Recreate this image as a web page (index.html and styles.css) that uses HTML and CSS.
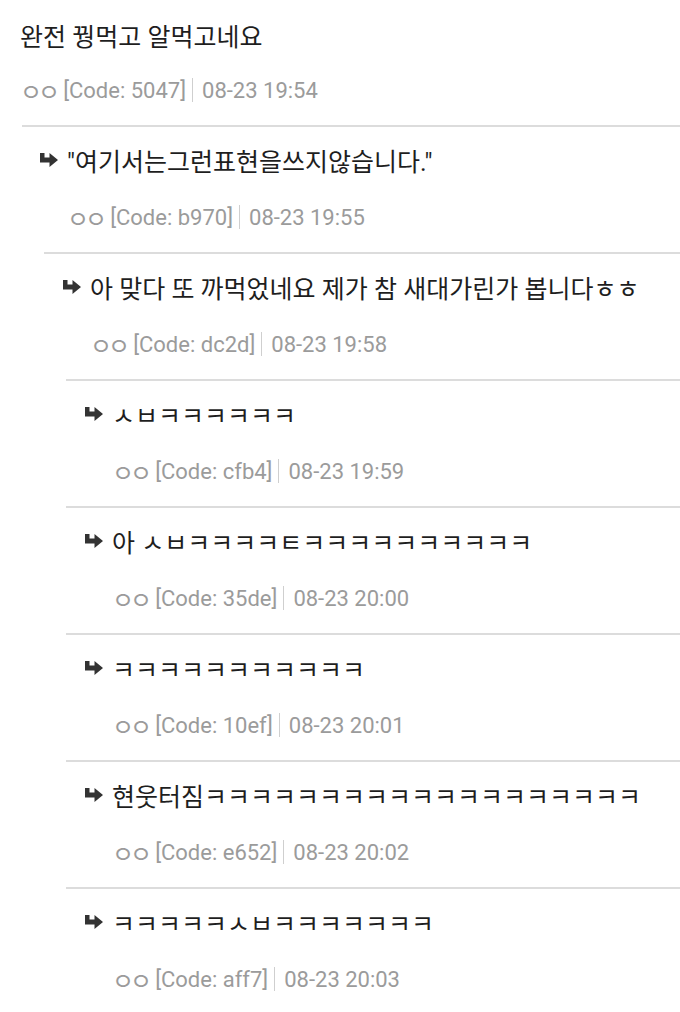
FILE: index.html
```html
<!DOCTYPE html>
<html lang="ko">
<head>
    <meta charset="UTF-8">
    <meta name="viewport" content="width=device-width, initial-scale=1.0">
    <title>댓글</title>
    <link rel="stylesheet" href="styles.css">
</head>
<body>
    <!-- 댓글 목록 -->
    <ul class="cmt-list">
        <li class="cmt d0">
            <div class="cmt-body">
                <p class="cmt-txt">완전 꿩먹고 알먹고네요</p>
                <div class="meta">
                    <span class="nick">ㅇㅇ</span><span class="code">[Code: 5047]</span><span class="sep"></span><span class="date">08-23 19:54</span>
                </div>
            </div>
        </li>
        <li class="cmt d1">
            <div class="cmt-body">
                <p class="cmt-txt"><svg class="re" viewBox="0 0 18 14"><path d="M0 0H4.5V4.5H9.5V0L18 7L9.5 14V9.5H0Z"/></svg>"여기서는그런표현을쓰지않습니다."</p>
                <div class="meta">
                    <span class="nick">ㅇㅇ</span><span class="code">[Code: b970]</span><span class="sep"></span><span class="date">08-23 19:55</span>
                </div>
            </div>
        </li>
        <li class="cmt d2">
            <div class="cmt-body">
                <p class="cmt-txt"><svg class="re" viewBox="0 0 18 14"><path d="M0 0H4.5V4.5H9.5V0L18 7L9.5 14V9.5H0Z"/></svg>아 맞다 또 까먹었네요 제가 참 새대가린가 봅니다ㅎㅎ</p>
                <div class="meta">
                    <span class="nick">ㅇㅇ</span><span class="code">[Code: dc2d]</span><span class="sep"></span><span class="date">08-23 19:58</span>
                </div>
            </div>
        </li>
        <li class="cmt d3">
            <div class="cmt-body">
                <p class="cmt-txt"><svg class="re" viewBox="0 0 18 14"><path d="M0 0H4.5V4.5H9.5V0L18 7L9.5 14V9.5H0Z"/></svg>ㅅㅂㅋㅋㅋㅋㅋㅋ</p>
                <div class="meta">
                    <span class="nick">ㅇㅇ</span><span class="code">[Code: cfb4]</span><span class="sep"></span><span class="date">08-23 19:59</span>
                </div>
            </div>
        </li>
        <li class="cmt d3">
            <div class="cmt-body">
                <p class="cmt-txt"><svg class="re" viewBox="0 0 18 14"><path d="M0 0H4.5V4.5H9.5V0L18 7L9.5 14V9.5H0Z"/></svg>아 ㅅㅂㅋㅋㅋㅋㅌㅋㅋㅋㅋㅋㅋㅋㅋㅋㅋ</p>
                <div class="meta">
                    <span class="nick">ㅇㅇ</span><span class="code">[Code: 35de]</span><span class="sep"></span><span class="date">08-23 20:00</span>
                </div>
            </div>
        </li>
        <li class="cmt d3">
            <div class="cmt-body">
                <p class="cmt-txt"><svg class="re" viewBox="0 0 18 14"><path d="M0 0H4.5V4.5H9.5V0L18 7L9.5 14V9.5H0Z"/></svg>ㅋㅋㅋㅋㅋㅋㅋㅋㅋㅋㅋ</p>
                <div class="meta">
                    <span class="nick">ㅇㅇ</span><span class="code">[Code: 10ef]</span><span class="sep"></span><span class="date">08-23 20:01</span>
                </div>
            </div>
        </li>
        <li class="cmt d3">
            <div class="cmt-body">
                <p class="cmt-txt"><svg class="re" viewBox="0 0 18 14"><path d="M0 0H4.5V4.5H9.5V0L18 7L9.5 14V9.5H0Z"/></svg>현웃터짐ㅋㅋㅋㅋㅋㅋㅋㅋㅋㅋㅋㅋㅋㅋㅋㅋㅋㅋㅋ</p>
                <div class="meta">
                    <span class="nick">ㅇㅇ</span><span class="code">[Code: e652]</span><span class="sep"></span><span class="date">08-23 20:02</span>
                </div>
            </div>
        </li>
        <li class="cmt d3">
            <div class="cmt-body">
                <p class="cmt-txt"><svg class="re" viewBox="0 0 18 14"><path d="M0 0H4.5V4.5H9.5V0L18 7L9.5 14V9.5H0Z"/></svg>ㅋㅋㅋㅋㅋㅅㅂㅋㅋㅋㅋㅋㅋㅋ</p>
                <div class="meta">
                    <span class="nick">ㅇㅇ</span><span class="code">[Code: aff7]</span><span class="sep"></span><span class="date">08-23 20:03</span>
                </div>
            </div>
        </li>
    </ul>
</body>
</html>
```

FILE: styles.css
```css
/* comment thread */
body {
    margin: 0;
    padding: 0;
    background: #fff;
    color: #222;
    font-family: 'Roboto', 'Noto Sans CJK KR', sans-serif;
    overflow: hidden;
}

.cmt-list {
    list-style: none;
    margin: 0;
    padding: 0;
}

.cmt {
    border-bottom: 2px solid #dcdcdc;
    padding: 21px 0 21px;
}

/* depth indents: line start / content start */
.cmt.d0 {
    margin-left: 22px;
    padding-top: 23px;
}

.cmt.d0 .cmt-body {
    margin-left: -2px;
}

.cmt.d1 {
    margin-left: 44px;
}

.cmt.d1 .cmt-body {
    margin-left: -4px;
}

.cmt.d2 {
    margin-left: 66px;
}

.cmt.d2 .cmt-body {
    margin-left: -3px;
}

.cmt.d3 {
    margin-left: 66px;
}

.cmt.d3 .cmt-body {
    margin-left: 19px;
}

.cmt-txt {
    margin: 0;
    display: flex;
    align-items: center;
    font-size: 25px;
    line-height: 30px;
    white-space: nowrap;
    color: #1e1e1e;
}

.re {
    width: 18px;
    height: 14px;
    margin-right: 9px;
    margin-bottom: 6px;
    flex-shrink: 0;
    fill: #333;
}

.meta {
    display: flex;
    align-items: center;
    margin-top: 25px;
    height: 28px;
    font-size: 22px;
    color: #9b9b9b;
    white-space: nowrap;
}

.d0 .meta {
    margin-top: 23px;
}

.d1 .meta,
.d2 .meta,
.d3 .meta {
    padding-left: 27px;
}

.nick {
    font-size: 24px;
    letter-spacing: -4px;
    margin-right: 7px;
}

.sep {
    width: 1px;
    height: 24px;
    background: #cfcfcf;
    margin: 0 9px 0 6px;
}
```
